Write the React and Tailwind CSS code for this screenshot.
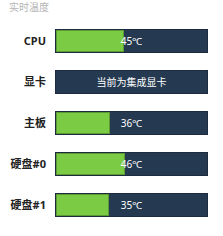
const rows = [
  { label: 'CPU', value: 45 },
  { label: '显卡', text: '当前为集成显卡' },
  { label: '主板', value: 36 },
  { label: '硬盘#0', value: 46 },
  { label: '硬盘#1', value: 35 },
]

function Bar({ value, text }) {
  return (
    <div className="relative ml-[9px] h-[24px] w-[153px] border border-[#1c2c3e] bg-[#253a51]">
      {value != null && (
        <div
          className="h-full border border-[#5b9a32] bg-[#7ccb45]"
          style={{ width: `${value}%` }}
        />
      )}
      <div className="absolute inset-0 flex items-center justify-center text-[10px] text-white">
        {text ?? `${value}℃`}
      </div>
    </div>
  )
}

export default function App() {
  return (
    <div
      className="h-[236px] w-[223px] bg-white"
      style={{ fontFamily: '"Noto Sans", "Noto Sans CJK SC", sans-serif' }}
    >
      <div className="pl-[9px] pt-[1px] text-[10px] leading-[13px] text-[#b5b5b5]">实时温度</div>
      <div className="mt-[15px] flex flex-col gap-[17px]">
        {rows.map((r) => (
          <div key={r.label} className="flex items-center">
            <div className="w-[46px] text-right text-[11px] font-bold text-[#222]">{r.label}</div>
            <Bar value={r.value} text={r.text} />
          </div>
        ))}
      </div>
    </div>
  )
}
